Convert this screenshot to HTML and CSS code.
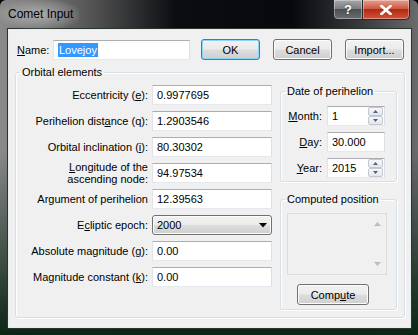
FILE: index.html
```html
<!DOCTYPE html>
<html lang="en">
<head>
<meta charset="UTF-8">
<title>Comet Input</title>
<link rel="stylesheet" href="styles.css">
</head>
<body>

<div class="window">
    <div class="titlebar">
        <span class="title">Comet Input</span>
        <div class="caption-btns">
            <span class="cap help">?</span>
            <span class="cap close">
                <svg width="12" height="10" viewBox="0 0 12 10"><path d="M1.5 1 L10.5 9 M10.5 1 L1.5 9" stroke="#fff" stroke-width="2.6" stroke-linecap="square"/></svg>
            </span>
        </div>
    </div>

    <div class="client">
        <div class="name-row">
            <label class="name-label"><u>N</u>ame:</label>
            <div class="textbox name-box"><span class="sel">Lovejoy</span></div>
            <button class="btn default">OK</button>
            <button class="btn">Cancel</button>
            <button class="btn">Import...</button>
        </div>

        <fieldset class="group orbital">
            <legend>Orbital elements</legend>
            <div class="orbital-body">
                <div class="form-grid">
                    <label>Eccentricity (<u>e</u>):</label>
                    <div class="textbox">0.9977695</div>
                    <label>Perihelion dist<u>a</u>nce (q):</label>
                    <div class="textbox">1.2903546</div>
                    <label>Orbital inclination (<u>i</u>):</label>
                    <div class="textbox">80.30302</div>
                    <label class="two-line"><u>L</u>ongitude of the<br>ascending node:</label>
                    <div class="textbox">94.97534</div>
                    <label>Argument of perihelion</label>
                    <div class="textbox">12.39563</div>
                    <label>E<u>c</u>liptic epoch:</label>
                    <div class="combo"><span>2000</span><svg width="8" height="5" viewBox="0 0 8 5"><path d="M0 0 H8 L4 4.5 Z" fill="#000"/></svg></div>
                    <label>Absolute magnitude (<u>g</u>):</label>
                    <div class="textbox">0.00</div>
                    <label>Magnitude constant (<u>k</u>):</label>
                    <div class="textbox">0.00</div>
                </div>

                <div class="side">
                    <fieldset class="group date">
                        <legend>Date of perihelion</legend>
                        <div class="date-grid">
                            <label><u>M</u>onth:</label>
                            <div class="textbox spin-box">1
                                <span class="spin">
                                    <span class="spin-btn"><svg width="5" height="3" viewBox="0 0 5 3"><path d="M0 3 L2.5 0 L5 3 Z" fill="#4d6185"/></svg></span>
                                    <span class="spin-btn"><svg width="5" height="3" viewBox="0 0 5 3"><path d="M0 0 L2.5 3 L5 0 Z" fill="#4d6185"/></svg></span>
                                </span>
                            </div>
                            <label><u>D</u>ay:</label>
                            <div class="textbox">30.000</div>
                            <label><u>Y</u>ear:</label>
                            <div class="textbox spin-box">2015
                                <span class="spin">
                                    <span class="spin-btn"><svg width="5" height="3" viewBox="0 0 5 3"><path d="M0 3 L2.5 0 L5 3 Z" fill="#4d6185"/></svg></span>
                                    <span class="spin-btn"><svg width="5" height="3" viewBox="0 0 5 3"><path d="M0 0 L2.5 3 L5 0 Z" fill="#4d6185"/></svg></span>
                                </span>
                            </div>
                        </div>
                    </fieldset>

                    <fieldset class="group computed">
                        <legend>Computed position</legend>
                        <div class="listbox">
                            <div class="scroll">
                                <svg width="7" height="4" viewBox="0 0 7 4"><path d="M0 4 L3.5 0 L7 4 Z" fill="#bdbdbd"/></svg>
                                <svg width="7" height="4" viewBox="0 0 7 4"><path d="M0 0 L3.5 4 L7 0 Z" fill="#bdbdbd"/></svg>
                            </div>
                        </div>
                        <button class="btn compute">Comp<u>u</u>te</button>
                    </fieldset>
                </div>
            </div>
        </fieldset>
    </div>
</div>

</body>
</html>
```

FILE: styles.css
```css
/* Vista style dialog */
body { margin: 0; font-family: 'Liberation Sans', Arial, sans-serif; font-size: 11px; color: #000; background: #000; }
u { text-decoration: underline; text-underline-offset: 1px; }

.window { width: 418px; height: 335px; box-sizing: border-box; border-radius: 6px 6px 0 0; overflow: hidden;
    background: linear-gradient(180deg, rgba(12,38,22,0) 0, rgba(12,38,22,0) 45%, #0c2616 100%),
                linear-gradient(90deg, #8a8a8a 0%, #5a5a5a 20%, #0b0d11 42%, #08090c 70%, #3d3f42 88%, #6a6b6d 100%); }

.titlebar { height: 29px; display: flex; justify-content: space-between; align-items: flex-start; }
.title { font-size: 12px; line-height: 29px; padding: 0 6px 0 8px; color: #000;
    background: radial-gradient(ellipse at center, rgba(220,220,220,0.55) 0%, rgba(200,200,200,0.2) 60%, rgba(200,200,200,0) 80%); }
.caption-btns { display: flex; margin-right: 8px; }
.cap { height: 19px; display: flex; align-items: center; justify-content: center; border: 1px solid #2a2a2a; border-top: none; box-shadow: inset 0 0 0 1px rgba(255,255,255,0.35); }
.help { width: 28px; border-radius: 0 0 0 5px; border-right: none; color: #fff; font-weight: bold; font-size: 13px;
    background: linear-gradient(180deg, #a6a8aa 0%, #7c7f82 45%, #4d5053 50%, #6b6e70 100%); text-shadow: 0 0 2px #333; }
.close { width: 46px; border-radius: 0 0 5px 0;
    background: linear-gradient(180deg, #e6a090 0%, #cf5a44 45%, #b32a14 50%, #d0543a 100%); }

.client { box-sizing: border-box; height: 299px; margin: 0 7px 0 8px; background: #f0f0f0; border: 1px solid #e9edf0;
    box-shadow: 0 0 0 1px #27352c; padding: 9px 5px 0 6px; }

.name-row { display: flex; align-items: center; height: 21px; padding-left: 2px; }
.name-label { width: 36px; }
.name-box { width: 137px; padding-left: 3px; }
.sel { background: #3399ff; color: #fff; line-height: 14px; padding: 0 1px; }

.textbox { box-sizing: border-box; height: 20px; background: #fff; border: 1px solid; border-color: #abadb3 #dbdfe6 #e3e9ef #e2e3ea;
    padding-left: 4px; display: flex; align-items: center; position: relative; }

.btn { box-sizing: border-box; width: 59px; height: 21px; padding: 0; font: inherit; color: #000; border: 1px solid #707070; border-radius: 3px;
    background: linear-gradient(180deg, #f2f2f2 0%, #ebebeb 48%, #dddddd 52%, #cfcfcf 100%); box-shadow: inset 0 0 0 1px #fcfcfc; margin-left: 13px; }
.btn.default { margin-left: 11px; border-color: #3c7fb1; box-shadow: inset 0 0 0 1px #8ed4f7; }

.group { margin: 0; border: 1px solid #d5dfe5; border-radius: 3px; box-shadow: 1px 1px 0 #fff, inset 1px 1px 0 #fff; }
.group legend { padding: 0 2px; line-height: 13px; }

.orbital { margin-top: 6px; padding: 6px 7px 7px 8px; }
.orbital legend { margin-left: -4px; }
.orbital-body { display: flex; gap: 8px; }

.form-grid { display: grid; grid-template-columns: 124px 120px; grid-auto-rows: 20px; row-gap: 6px; column-gap: 4px; align-self: flex-start; }
.form-grid label { text-align: right; align-self: center; white-space: nowrap; }
.form-grid label.two-line { line-height: 12px; }

.combo { box-sizing: border-box; height: 20px; border: 1px solid #707070; border-radius: 3px; display: flex; align-items: center; justify-content: space-between;
    padding: 0 4px 0 4px; background: linear-gradient(180deg, #f2f2f2 0%, #ebebeb 48%, #dddddd 52%, #cfcfcf 100%); box-shadow: inset 0 0 0 1px #fcfcfc; }

.side { width: 117px; display: flex; flex-direction: column; gap: 11px; }
.date { padding: 8px 10px 3px 5px; }
.date legend { margin-left: -1px; }
.date-grid { display: grid; grid-template-columns: 36px 58px; grid-auto-rows: 20px; row-gap: 6px; column-gap: 5px; }
.date-grid label { text-align: right; align-self: center; }
.spin { position: absolute; right: 1px; top: 0; bottom: 0; width: 15px; display: flex; flex-direction: column; }
.spin-btn { flex: 1; display: flex; align-items: center; justify-content: center; border: 1px solid #c2c8d0; border-radius: 2px;
    background: linear-gradient(180deg, #f6f7f9, #e3e7ec); }

.computed { padding: 7px 9px 4px 6px; }
.computed legend { margin-left: -2px; }
.listbox { box-sizing: border-box; height: 62px; border: 1px solid #dcdcdc; background: #f0f0f0; display: flex; justify-content: flex-end; }
.scroll { width: 17px; display: flex; flex-direction: column; justify-content: space-between; align-items: center; padding: 8px 0 8px; box-sizing: border-box; }
.btn.compute { width: 72px; margin: 9px 0 0 10px; display: block; }
```
